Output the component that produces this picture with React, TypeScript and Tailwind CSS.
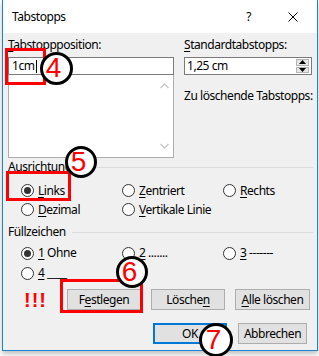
import React from "react";

const U = ({ children }: { children: React.ReactNode }) => (
  <span className="underline underline-offset-[2px] decoration-[1px]">{children}</span>
);

const Radio = ({ checked, children }: { checked?: boolean; children: React.ReactNode }) => (
  <div className="flex items-center gap-[4px]">
    <div className="w-[13px] h-[13px] rounded-full border border-[#333] bg-white flex items-center justify-center shrink-0">
      {checked && <div className="w-[7px] h-[7px] rounded-full bg-[#333]" />}
    </div>
    <span className="whitespace-nowrap">{children}</span>
  </div>
);

const Btn = ({ children, w, primary }: { children: React.ReactNode; w: string; primary?: boolean }) => (
  <div
    className={`${w} h-[21px] flex items-center justify-center bg-[#e1e1e1] whitespace-nowrap ${
      primary ? "border-2 border-[#0078d7]" : "border border-[#adadad]"
    }`}
  >
    {children}
  </div>
);

const Circle = ({ n, x, y, d }: { n: string; x: number; y: number; d: number }) => (
  <div
    className="absolute rounded-full border-[3px] border-black bg-white flex items-center justify-center text-[#ff0000] text-[28px] leading-none tracking-normal"
    style={{ left: x - d / 2, top: y - d / 2, width: d, height: d, fontFamily: '"Liberation Sans", Arial, sans-serif' }}
  >
    <span className="-ml-[5px] -mt-[1px]">{n}</span>
  </div>
);

const RedBox = ({ x, y, w, h }: { x: number; y: number; w: number; h: number }) => (
  <div className="absolute border-[3px] border-[#ff0000]" style={{ left: x, top: y, width: w, height: h }} />
);

export default function App() {
  return (
    <div
      className="relative w-[319px] h-[356px] bg-white overflow-hidden text-[12px] leading-[16px] tracking-[-0.45px] text-black"
      style={{ fontFamily: '"Noto Sans", "Segoe UI", sans-serif' }}
    >
      <div className="ml-[2px] w-[316px] h-[351px] border-x border-b border-[#1883d7] flex flex-col shadow-[0_3px_5px_rgba(0,0,0,0.25)]">
        {/* title bar */}
        <div className="h-[33px] bg-white flex items-center pl-[9px] pr-[19px] shrink-0">
          <span className="flex-1">Tabstopps</span>
          <span className="mr-[37px]">?</span>
          <svg width="10" height="10" viewBox="0 0 10 10">
            <path d="M0.5 0.5 L9.5 9.5 M9.5 0.5 L0.5 9.5" stroke="#000" strokeWidth="1" />
          </svg>
        </div>
        {/* body */}
        <div className="flex-1 bg-[#f0f0f0] pl-[5px] pr-[4px] pt-[4px]">
          <div className="flex gap-[10px]">
            <div className="w-[166px]">
              <div className="h-[20px]">
                <U>T</U>abstoppposition:
              </div>
              <div className="h-[18px] bg-white border border-[#7a7a7a] flex items-center pl-[3px]">
                1cm<span className="inline-block w-px h-[13px] bg-black ml-[1px]" />
              </div>
              <div className="h-[83px] bg-white border border-[#adadad] border-t-0 flex justify-end">
                <div className="w-[17px] flex flex-col justify-between items-center py-[8px]">
                  <svg width="9" height="6" viewBox="0 0 9 6">
                    <path d="M0.5 5 L4.5 1 L8.5 5" stroke="#c6c6c6" strokeWidth="1.3" fill="none" />
                  </svg>
                  <svg width="9" height="6" viewBox="0 0 9 6">
                    <path d="M0.5 1 L4.5 5 L8.5 1" stroke="#c6c6c6" strokeWidth="1.3" fill="none" />
                  </svg>
                </div>
              </div>
            </div>
            <div className="w-[128px]">
              <div className="h-[20px]">
                <U>S</U>tandardtabstopps:
              </div>
              <div className="h-[18px] bg-white border border-[#7a7a7a] flex items-center pl-[2px] pr-[2px]">
                <span className="flex-1">1,25 cm</span>
                <div className="w-[13px] h-[14px] flex flex-col gap-px">
                  <div className="flex-1 bg-[#e6e6e6] border border-[#b5b5b5] flex items-center justify-center">
                    <svg width="7" height="4" viewBox="0 0 7 4"><path d="M3.5 0 L7 4 L0 4Z" fill="#000" /></svg>
                  </div>
                  <div className="flex-1 bg-[#e6e6e6] border border-[#b5b5b5] flex items-center justify-center">
                    <svg width="7" height="4" viewBox="0 0 7 4"><path d="M0 0 L7 0 L3.5 4Z" fill="#000" /></svg>
                  </div>
                </div>
              </div>
              <div className="mt-[13px] whitespace-nowrap">Zu löschende Tabstopps:</div>
            </div>
          </div>

          {/* Ausrichtung */}
          <div className="flex items-center gap-[6px] mt-[1px]">
            <span>Ausrichtung</span>
            <div className="flex-1 h-px bg-[#dcdcdc]" />
          </div>
          <div className="grid grid-cols-[101px_101px_101px] pl-[13px] mt-[6px]">
            <div className="h-[19px] flex items-center"><Radio checked><U>L</U>inks</Radio></div>
            <div className="h-[19px] flex items-center"><Radio><U>Z</U>entriert</Radio></div>
            <div className="h-[19px] flex items-center"><Radio><U>R</U>echts</Radio></div>
            <div className="h-[19px] flex items-center"><Radio><U>D</U>ezimal</Radio></div>
            <div className="h-[19px] flex items-center"><Radio><U>V</U>ertikale Linie</Radio></div>
          </div>

          {/* Füllzeichen */}
          <div className="flex items-center gap-[6px] mt-[5px]">
            <span>Füllzeichen</span>
            <div className="flex-1 h-px bg-[#dcdcdc]" />
          </div>
          <div className="grid grid-cols-[101px_101px_101px] pl-[13px] mt-[3px]">
            <div className="h-[20px] flex items-center"><Radio checked><U>1</U> Ohne</Radio></div>
            <div className="h-[20px] flex items-center"><Radio><U>2</U> .......</Radio></div>
            <div className="h-[20px] flex items-center"><Radio><U>3</U> -------</Radio></div>
            <div className="h-[20px] flex items-center"><Radio><U>4</U> ____</Radio></div>
          </div>

          {/* buttons */}
          <div className="flex items-center mt-[6px]">
            <div
              className="w-[59px] pl-[16px] text-[#ff0000] text-[20px] font-bold leading-none tracking-[1px]"
              style={{ fontFamily: '"Liberation Sans", Arial, sans-serif' }}
            >
              !!!
            </div>
            <div className="flex gap-[10px]">
              <Btn w="w-[74px]">F<U>e</U>stlegen</Btn>
              <Btn w="w-[74px]">Lösche<U>n</U></Btn>
              <Btn w="w-[75px]"><U>A</U>lle löschen</Btn>
            </div>
          </div>
          <div className="flex justify-end gap-[11px] mt-[13px] pr-[6px]">
            <Btn w="w-[74px]" primary>OK</Btn>
            <Btn w="w-[69px]">Abbrechen</Btn>
          </div>
        </div>
      </div>

      {/* annotations */}
      <RedBox x={5} y={48} w={41} h={37} />
      <RedBox x={6} y={171} w={65} h={30} />
      <RedBox x={60} y={279} w={83} h={34} />
      <Circle n="4" x={56} y={68} d={33} />
      <Circle n="5" x={81} y={162} d={32} />
      <Circle n="6" x={132} y={272} d={32} />
      <Circle n="7" x={216} y={340} d={34} />
    </div>
  );
}
